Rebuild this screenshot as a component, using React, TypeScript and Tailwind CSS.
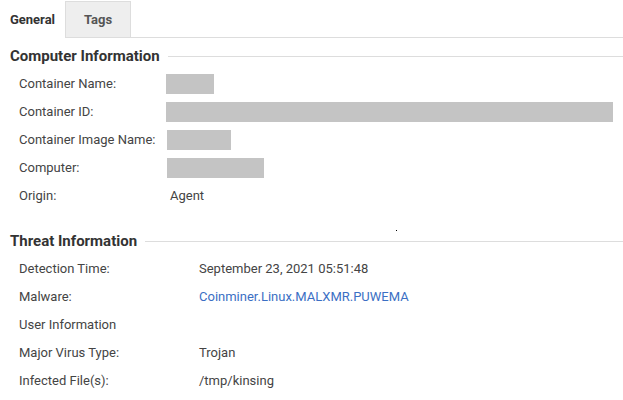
const computerRows: { label: string; box?: string; value?: string }[] = [
  { label: "Container Name:", box: "w-[48px]" },
  { label: "Container ID:", box: "w-[447px]" },
  { label: "Container Image Name:", box: "w-[64px] ml-px" },
  { label: "Computer:", box: "w-[97px] ml-px" },
  { label: "Origin:", value: "Agent" },
]

const threatRows: { label: string; value?: string; link?: boolean }[] = [
  { label: "Detection Time:", value: "September 23, 2021 05:51:48" },
  { label: "Malware:", value: "Coinminer.Linux.MALXMR.PUWEMA", link: true },
  { label: "User Information" },
  { label: "Major Virus Type:", value: "Trojan" },
  { label: "Infected File(s):", value: "/tmp/kinsing" },
]

const SectionTitle = ({ title }: { title: string }): JSX.Element => (
  <div className="flex items-center pl-[10px] h-[24px]">
    <span className="text-[15px] font-bold text-[#333]">{title}</span>
    <div className="flex-1 ml-[8px] border-t border-[#ddd]" />
  </div>
)

const App = (): JSX.Element => {
  return (
    <div className="w-[623px] h-[400px] bg-white overflow-hidden text-[13px] text-[#444] font-['Roboto',sans-serif]">
      <div className="flex h-[38px] pt-px">
        <div className="w-[66px] border-r border-[#ddd] bg-white flex items-center justify-center font-bold text-[13px] text-[#333]">
          General
        </div>
        <div className="w-[65px] bg-[#eee] border-b border-t border-r border-[#ddd] flex items-center justify-center font-bold text-[13px] text-[#555]">
          Tags
        </div>
        <div className="flex-1 border-b border-[#ddd]" />
      </div>

      <div className="mt-[6px]">
        <SectionTitle title="Computer Information" />
        <div className="mt-[2px]">
          {computerRows.map((row) => (
            <div key={row.label} className="flex items-center h-[28px]">
              <div className="w-[166px] pl-[19px] shrink-0 whitespace-nowrap">{row.label}</div>
              {row.box ? (
                <div className={`h-[20px] bg-[#c4c4c4] ${row.box}`} />
              ) : (
                <div className="pl-[4px]">{row.value}</div>
              )}
            </div>
          ))}
        </div>
      </div>

      <div className="relative mt-[19px]">
        <div className="absolute left-[396px] top-[1px] w-px h-px bg-black" />
        <SectionTitle title="Threat Information" />
        <div className="mt-[2px]">
          {threatRows.map((row) => (
            <div key={row.label} className="flex items-center h-[28px]">
              <div className="w-[199px] pl-[19px] shrink-0 whitespace-nowrap">{row.label}</div>
              {row.value && (
                <div className={row.link ? "text-[#3b6fc4]" : ""}>{row.value}</div>
              )}
            </div>
          ))}
        </div>
      </div>
    </div>
  )
}

export default App
